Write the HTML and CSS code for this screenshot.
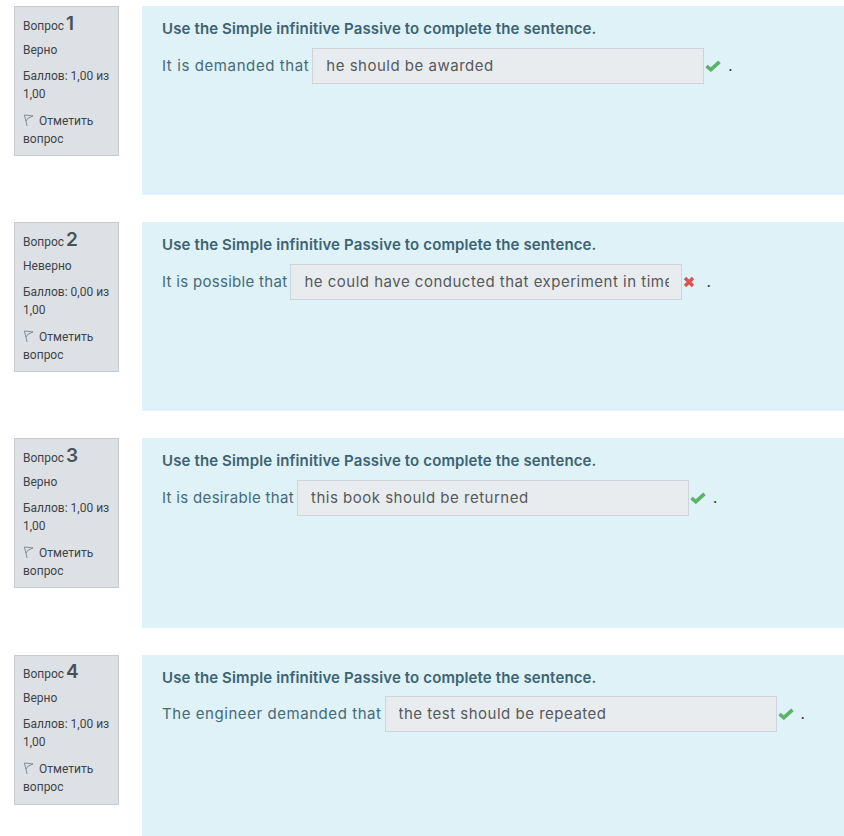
FILE: index.html
```html
<!DOCTYPE html>
<html lang="en">
<head>
  <meta charset="UTF-8">
  <meta name="viewport" content="width=device-width, initial-scale=1.0">
  <title>Quiz review</title>
  <link rel="stylesheet" href="styles.css">
</head>
<body>

  <!-- Question 1 -->
  <div class="que">
    <div class="info">
      <h3 class="qno">Вопрос <span class="num">1</span></h3>
      <div class="state">Верно</div>
      <div class="grade">Баллов: 1,00 из 1,00</div>
      <div class="flag">
        <svg class="flag-icon" viewBox="0 0 12 14"><path d="M1.5 1 L4.5 13 M1.5 1 L11 2 L5.5 4.5 L3.5 7.5" fill="none" stroke="#7d858b" stroke-width="1"/></svg>
        Отметить вопрос
      </div>
    </div>
    <div class="content">
      <p class="qtext">Use the Simple infinitive Passive to complete the sentence.</p>
      <div class="answer">
        <span class="label-wide">It is demanded that</span>
        <input class="answer-input" type="text" value="he should be awarded" readonly>
        <svg class="mark" viewBox="0 0 16 12"><path d="M1.5 6 L5.8 9.7 L14.5 1.8" fill="none" stroke="#5cb268" stroke-width="3.6"/></svg>
        <span class="dot">.</span>
      </div>
    </div>
  </div>

  <!-- Question 2 -->
  <div class="que">
    <div class="info">
      <h3 class="qno">Вопрос <span class="num">2</span></h3>
      <div class="state">Неверно</div>
      <div class="grade">Баллов: 0,00 из 1,00</div>
      <div class="flag">
        <svg class="flag-icon" viewBox="0 0 12 14"><path d="M1.5 1 L4.5 13 M1.5 1 L11 2 L5.5 4.5 L3.5 7.5" fill="none" stroke="#7d858b" stroke-width="1"/></svg>
        Отметить вопрос
      </div>
    </div>
    <div class="content">
      <p class="qtext">Use the Simple infinitive Passive to complete the sentence.</p>
      <div class="answer">
        <span>It is possible that</span>
        <input class="answer-input" type="text" value="he could have conducted that experiment in time" readonly>
        <svg class="mark cross" viewBox="0 0 12 12"><path d="M2 2 L10 10 M10 2 L2 10" fill="none" stroke="#d9534f" stroke-width="3.4"/></svg>
        <span class="dot">.</span>
      </div>
    </div>
  </div>

  <!-- Question 3 -->
  <div class="que">
    <div class="info">
      <h3 class="qno">Вопрос <span class="num">3</span></h3>
      <div class="state">Верно</div>
      <div class="grade">Баллов: 1,00 из 1,00</div>
      <div class="flag">
        <svg class="flag-icon" viewBox="0 0 12 14"><path d="M1.5 1 L4.5 13 M1.5 1 L11 2 L5.5 4.5 L3.5 7.5" fill="none" stroke="#7d858b" stroke-width="1"/></svg>
        Отметить вопрос
      </div>
    </div>
    <div class="content">
      <p class="qtext">Use the Simple infinitive Passive to complete the sentence.</p>
      <div class="answer">
        <span class="label-mid">It is desirable that</span>
        <input class="answer-input" type="text" value="this book should be returned" readonly>
        <svg class="mark" viewBox="0 0 16 12"><path d="M1.5 6 L5.8 9.7 L14.5 1.8" fill="none" stroke="#5cb268" stroke-width="3.6"/></svg>
        <span class="dot">.</span>
      </div>
    </div>
  </div>

  <!-- Question 4 -->
  <div class="que">
    <div class="info">
      <h3 class="qno">Вопрос <span class="num">4</span></h3>
      <div class="state">Верно</div>
      <div class="grade">Баллов: 1,00 из 1,00</div>
      <div class="flag">
        <svg class="flag-icon" viewBox="0 0 12 14"><path d="M1.5 1 L4.5 13 M1.5 1 L11 2 L5.5 4.5 L3.5 7.5" fill="none" stroke="#7d858b" stroke-width="1"/></svg>
        Отметить вопрос
      </div>
    </div>
    <div class="content">
      <p class="qtext">Use the Simple infinitive Passive to complete the sentence.</p>
      <div class="answer">
        <span class="label-long">The engineer demanded that</span>
        <input class="answer-input" type="text" value="the test should be repeated" readonly>
        <svg class="mark" viewBox="0 0 16 12"><path d="M1.5 6 L5.8 9.7 L14.5 1.8" fill="none" stroke="#5cb268" stroke-width="3.6"/></svg>
        <span class="dot">.</span>
      </div>
    </div>
  </div>

</body>
</html>
```

FILE: styles.css
```css
/* Reset and Global Styles */
* { margin: 0; padding: 0; box-sizing: border-box; }
html, body {
  height: 836px;
  overflow: hidden;
}
body {
  background: #fff;
  padding: 6px 0 0 14px;
  font-family: Inter, "Open Sans", sans-serif;
  color: #373a3c;
}

/* Question block */
.que {
  display: flex;
  align-items: flex-start;
  gap: 23px;
  height: 189px;
  margin-bottom: 27px;
}
.que:nth-child(3) { height: 190px; }
.que:nth-child(4) {
  height: 181px;
  margin-bottom: 0;
}
.que:nth-child(4) .info { padding-top: 5px; }
.que:nth-child(4) .answer { margin-top: 7px; }

/* Left info box */
.info {
  width: 105px;
  height: 150px;
  padding: 6px 8px 0;
  background: #dde1e5;
  border: 1px solid #c6cbd0;
  font-family: Roboto, sans-serif;
  font-size: 12px;
  line-height: 18px;
  color: #3d4448;
}
.qno {
  height: 22px;
  font-size: 12px;
  font-weight: 400;
  line-height: 22px;
}
.num {
  font-family: Inter, sans-serif;
  font-size: 19px;
  font-weight: 600;
  color: #45525a;
  margin-left: -1px;
}
.state { margin-top: 6px; }
.grade { margin-top: 8px; }
.flag { margin-top: 9px; }
.flag-icon {
  width: 11px;
  height: 13px;
  margin-right: 2px;
  vertical-align: -2px;
}

/* Right content box */
.content {
  flex: 1;
  height: 100%;
  padding: 12px 20px;
  background: #def2f8;
  color: #466a78;
}
.qtext {
  font-size: 15px;
  font-weight: 600;
  line-height: 22px;
  letter-spacing: 0.13px;
  color: #3d6372;
}
.answer {
  display: flex;
  align-items: center;
  height: 36px;
  margin-top: 8px;
  font-size: 15px;
  letter-spacing: 0.3px;
}
.answer span { padding-bottom: 2px; }
.label-wide { letter-spacing: 0.6px; }
.label-mid { letter-spacing: 0.32px; }
.label-long { letter-spacing: 0.56px; }
.answer-input {
  width: 392px;
  height: 36px;
  margin-left: 3px;
  padding: 0 12px 2px 13px;
  background: #e9ecef;
  border: 1px solid #ced4da;
  font-family: Inter, sans-serif;
  font-size: 15px;
  letter-spacing: 0.5px;
  color: #55595c;
  outline: none;
}
.mark {
  width: 16px;
  height: 12px;
  margin-left: 1px;
}
.cross {
  width: 12px;
  margin-right: 4px;
}
.dot { margin-left: 7px; color: #373a3c; }
```
